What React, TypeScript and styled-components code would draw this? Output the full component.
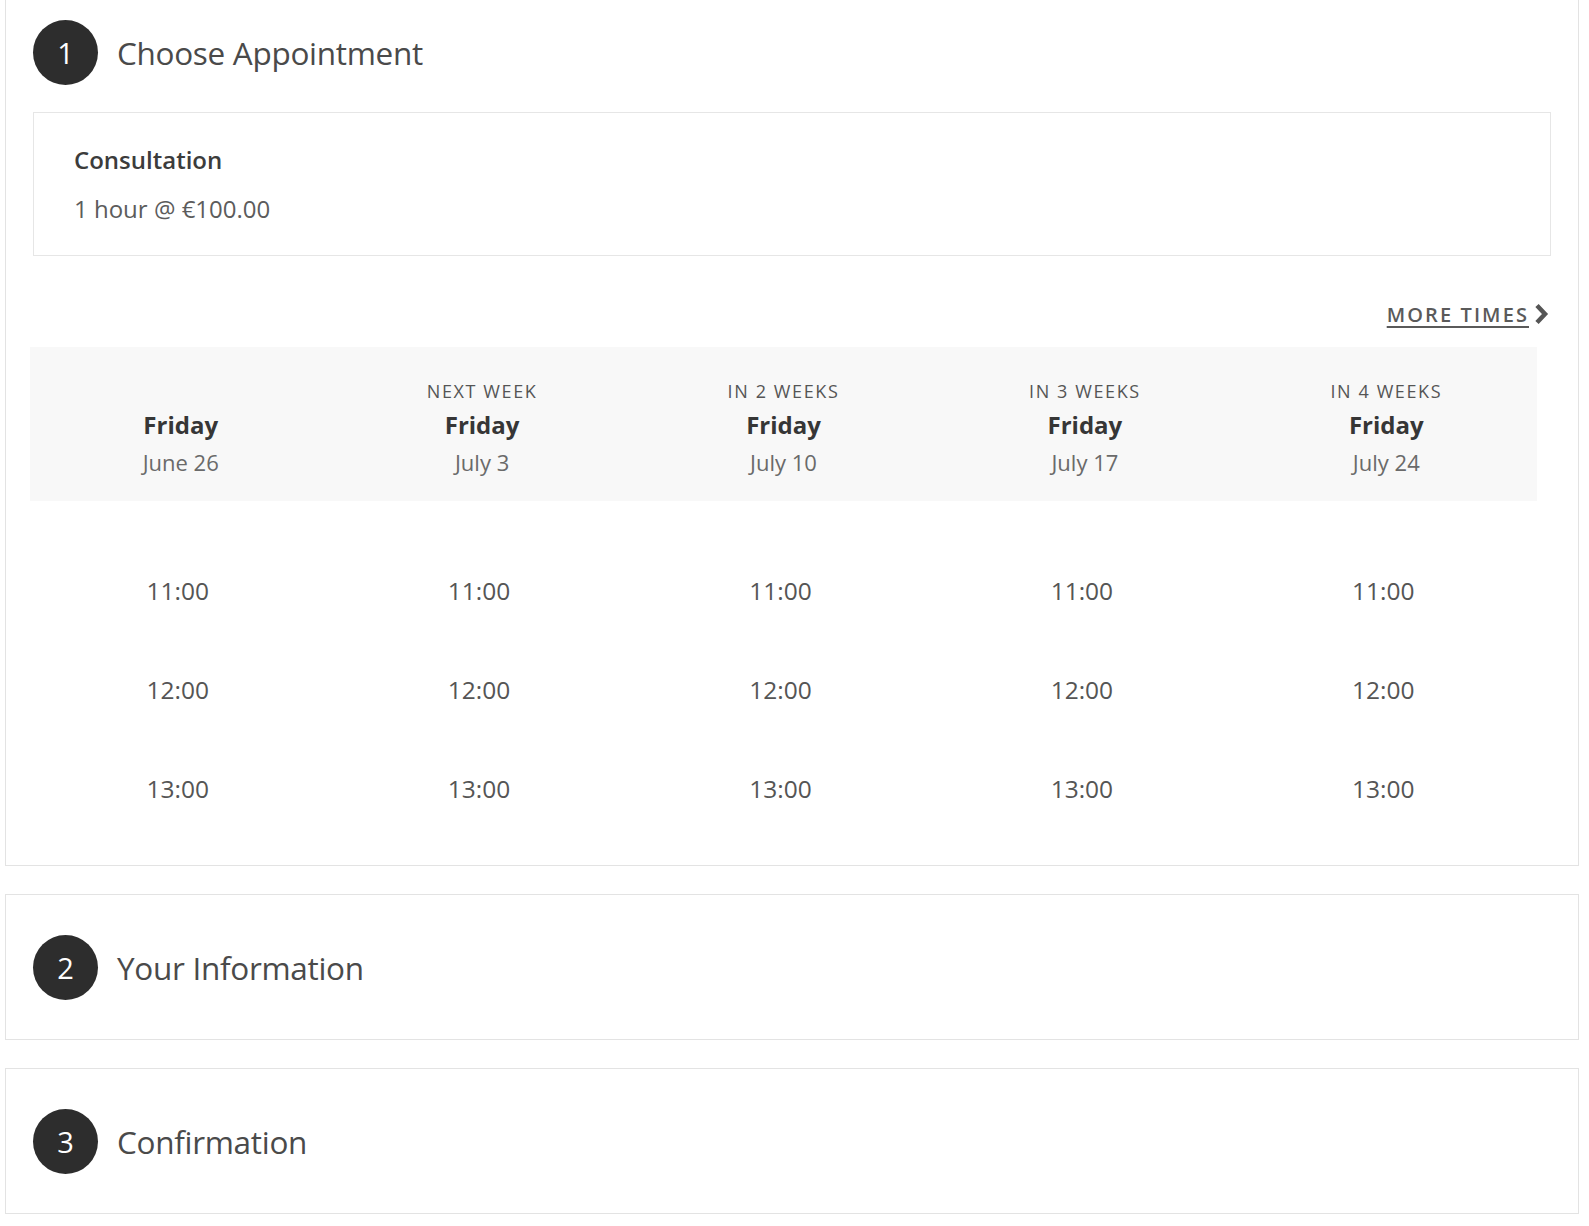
import React from "react";
import styled, { createGlobalStyle } from "styled-components";

const GlobalStyle = createGlobalStyle`
  html, body {
    margin: 0;
    padding: 0;
    background: #ffffff;
    font-family: "Open Sans", "Noto Sans", sans-serif;
    color: #444;
  }
  * { box-sizing: border-box; }
`;

const Page = styled.div`
  padding: 0 10px 0 5px;
  overflow: hidden;
`;

const Card = styled.section<{ $first?: boolean }>`
  border: 1px solid #e3e3e3;
  padding: 40px 27px ${(p) => (p.$first ? "27px" : "40px")};
  margin-top: ${(p) => (p.$first ? "-21px" : "0")};
  margin-bottom: 28px;
  background: #fff;
`;

const StepHeader = styled.div`
  display: flex;
  align-items: center;
  gap: 19px;
  height: 64px;
`;

const StepCircle = styled.div`
  width: 65px;
  height: 65px;
  border-radius: 50%;
  background: #2d2d2d;
  color: #fff;
  display: flex;
  align-items: center;
  justify-content: center;
  font-size: 29px;
  font-weight: 400;
  flex-shrink: 0;
`;

const StepTitle = styled.h2`
  margin: 0;
  font-size: 31.5px;
  font-weight: 400;
  color: #4a4a4a;
  letter-spacing: -0.3px;
`;

const ServiceBox = styled.div`
  margin-top: 28px;
  border: 1px solid #e6e6e6;
  height: 144px;
  padding: 32px 40px 0;
`;

const ServiceName = styled.div`
  font-size: 24px;
  font-weight: 600;
  color: #3c3c3c;
  line-height: 30px;
`;

const ServiceMeta = styled.div`
  font-size: 24px;
  color: #5c5c5c;
  line-height: 30px;
  margin-top: 19px;
`;

const MoreRow = styled.div`
  display: flex;
  justify-content: flex-end;
  align-items: flex-start;
  margin-top: 41px;
  padding: 3px 2px 0 0;
  height: 50px;
`;

const MoreLink = styled.a`
  display: inline-flex;
  align-items: center;
  gap: 5px;
  font-size: 20px;
  letter-spacing: 2.1px;
  font-weight: 600;
  color: #5a5a5a;
  text-decoration: underline;
  text-underline-offset: 4px;
  text-decoration-thickness: 2px;
  height: 28px;
  cursor: pointer;
`;

const Schedule = styled.div`
  margin-left: -3px;
  width: 1507px;
`;

const DayBand = styled.div`
  display: grid;
  grid-template-columns: repeat(5, 1fr);
  background: #f8f8f8;
  padding: 34px 0 25px;
`;

const DayHead = styled.div`
  display: flex;
  flex-direction: column;
  align-items: center;
  text-align: center;
`;

const WeekLabel = styled.div`
  font-size: 18px;
  line-height: 20px;
  height: 20px;
  letter-spacing: 1.6px;
  color: #555;
  text-transform: uppercase;
`;

const DayName = styled.div`
  font-size: 24px;
  line-height: 32px;
  font-weight: 700;
  color: #363636;
  margin-top: 8px;
`;

const DayDate = styled.div`
  font-size: 22px;
  line-height: 28px;
  color: #6a6a6a;
  margin-top: 7px;
`;

const TimesGrid = styled.div`
  display: grid;
  grid-template-columns: repeat(5, 1fr);
  padding-top: 40px;
`;

const TimeCol = styled.div`
  display: flex;
  flex-direction: column;
  align-items: center;
`;

const TimeSlot = styled.button`
  border: none;
  background: transparent;
  font-family: inherit;
  font-size: 24.5px;
  color: #555;
  height: 99px;
  line-height: 99px;
  padding: 0;
  margin-left: -6px;
  cursor: pointer;
`;

const Chevron = () => (
  <svg width="15" height="22" viewBox="0 0 15 22" aria-hidden="true">
    <polyline
      points="3,2.5 11,11 3,19.5"
      fill="none"
      stroke="#555"
      strokeWidth="4.5"
      strokeLinecap="butt"
      strokeLinejoin="miter"
    />
  </svg>
);

const days = [
  { label: "", date: "June 26" },
  { label: "Next week", date: "July 3" },
  { label: "In 2 weeks", date: "July 10" },
  { label: "In 3 weeks", date: "July 17" },
  { label: "In 4 weeks", date: "July 24" },
];

const times = ["11:00", "12:00", "13:00"];

export default function App() {
  return (
    <>
      <GlobalStyle />
      <Page>
        <Card $first>
          <StepHeader>
            <StepCircle>1</StepCircle>
            <StepTitle>Choose Appointment</StepTitle>
          </StepHeader>
          <ServiceBox>
            <ServiceName>Consultation</ServiceName>
            <ServiceMeta>1 hour @ €100.00</ServiceMeta>
          </ServiceBox>
          <MoreRow>
            <MoreLink>
              MORE TIMES
              <Chevron />
            </MoreLink>
          </MoreRow>
          <Schedule>
            <DayBand>
              {days.map((d) => (
                <DayHead key={d.date}>
                  <WeekLabel>{d.label}</WeekLabel>
                  <DayName>Friday</DayName>
                  <DayDate>{d.date}</DayDate>
                </DayHead>
              ))}
            </DayBand>
            <TimesGrid>
              {days.map((d) => (
                <TimeCol key={d.date}>
                  {times.map((t) => (
                    <TimeSlot key={t}>{t}</TimeSlot>
                  ))}
                </TimeCol>
              ))}
            </TimesGrid>
          </Schedule>
        </Card>
        <Card>
          <StepHeader>
            <StepCircle>2</StepCircle>
            <StepTitle>Your Information</StepTitle>
          </StepHeader>
        </Card>
        <Card>
          <StepHeader>
            <StepCircle>3</StepCircle>
            <StepTitle>Confirmation</StepTitle>
          </StepHeader>
        </Card>
      </Page>
    </>
  );
}
